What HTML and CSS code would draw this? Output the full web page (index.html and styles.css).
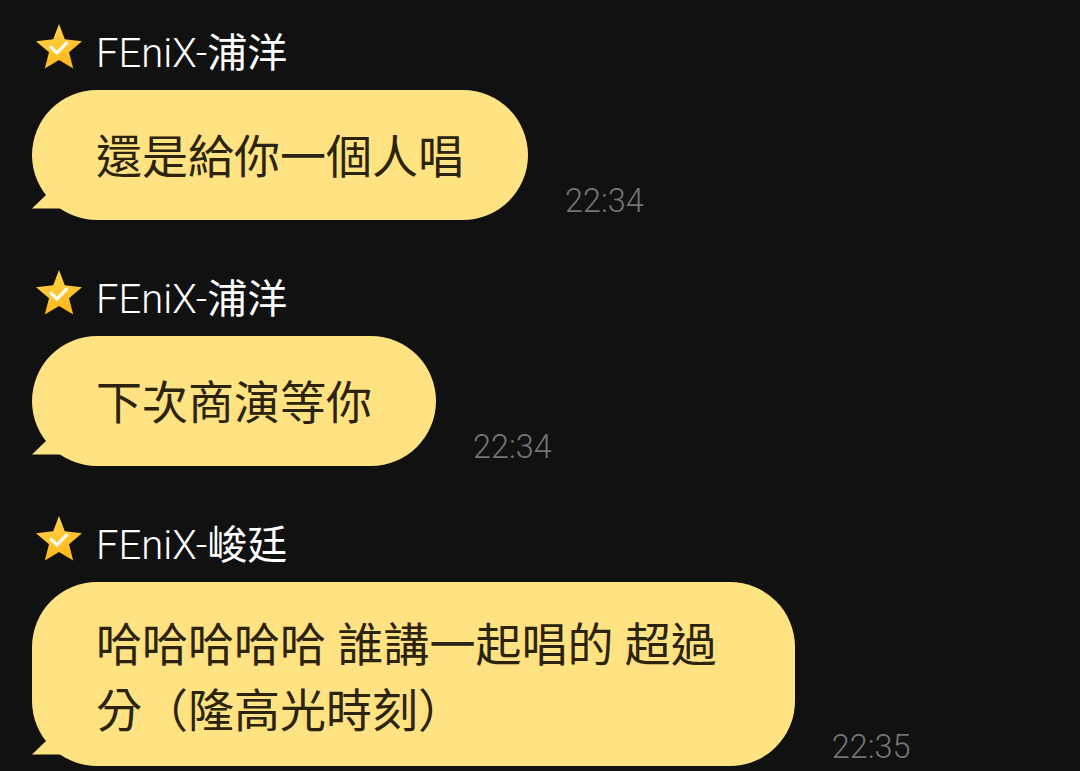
FILE: index.html
```html
<!DOCTYPE html>
<html lang="zh-Hant">
<head>
<meta charset="UTF-8">
<title>聊天室</title>
<link rel="stylesheet" href="styles.css">
</head>
<body>
<svg width="0" height="0" class="defs">
  <defs>
    <linearGradient id="gold" x1="0" y1="0" x2="0.3" y2="1">
      <stop offset="0" stop-color="#ffd654"/>
      <stop offset="1" stop-color="#ffb919"/>
    </linearGradient>
    <symbol id="star" viewBox="0 0 48 48">
      <path fill="url(#gold)" d="M24 2l5.800 15.300L47 19.300 34 30.200l4.200 16.300L24 38 9.800 46.500 14 30.200 1 19.300l17.200-2z"/>
      <path d="M16 25.300l6 5.700 9.500-10" fill="none" stroke="#fffbea" stroke-width="3.300" stroke-linecap="round"/>
    </symbol>
    <symbol id="tail" viewBox="0 0 40 26">
      <path fill="#ffe282" d="M13 13L0 25.500h36L28 0z"/>
    </symbol>
  </defs>
</svg>
<div class="chat">
  <div class="message">
    <div class="sender"><svg class="star"><use href="#star"/></svg><span class="name">FEniX-<b>浦洋</b></span></div>
    <div class="row">
      <div class="bubble">還是給你一個人唱<svg class="tail"><use href="#tail"/></svg></div>
      <span class="time">22:34</span>
    </div>
  </div>
  <div class="message">
    <div class="sender"><svg class="star"><use href="#star"/></svg><span class="name">FEniX-<b>浦洋</b></span></div>
    <div class="row">
      <div class="bubble">下次商演等你<svg class="tail"><use href="#tail"/></svg></div>
      <span class="time">22:34</span>
    </div>
  </div>
  <div class="message">
    <div class="sender"><svg class="star"><use href="#star"/></svg><span class="name">FEniX-<b>峻廷</b></span></div>
    <div class="row">
      <div class="bubble multiline">哈哈哈哈哈 誰講一起唱的 超過<br>分（隆高光時刻）<svg class="tail"><use href="#tail"/></svg></div>
      <span class="time">22:35</span>
    </div>
  </div>
</div>
</body>
</html>
```
FILE: styles.css
```css
body {
  margin: 0;
  background-color: #111;
  font-family: Roboto, "Noto Sans CJK TC", sans-serif;
}

.defs {
  position: absolute;
}

.chat {
  padding: 16px 32px 0;
}

.message {
  margin-bottom: 42px;
}

.message:last-child {
  margin-bottom: 0;
}

.sender {
  display: flex;
  height: 74px;
}

.star {
  width: 48px;
  height: 48px;
  margin: 6px 13.5px 0 2.5px;
}

.name {
  color: #fff;
  font-size: 40px;
  font-weight: 300;
  line-height: 76px;
  white-space: nowrap;
}

.name b {
  font-weight: 400;
}

.row {
  display: flex;
  align-items: flex-end;
}

.bubble {
  position: relative;
  padding: 34px 64px 30px;
  border-radius: 65px;
  background-color: #ffe282;
  color: #2b230b;
  font-size: 46px;
  line-height: 66px;
  white-space: nowrap;
}

.multiline {
  padding: 30px 78px 22px 64px;
}

.tail {
  position: absolute;
  left: 0;
  bottom: 11px;
  width: 40px;
  height: 26px;
}

.time {
  margin: 0 0 1px 37px;
  color: #747474;
  font-size: 32.4px;
  font-weight: 300;
  line-height: 36px;
}
```
